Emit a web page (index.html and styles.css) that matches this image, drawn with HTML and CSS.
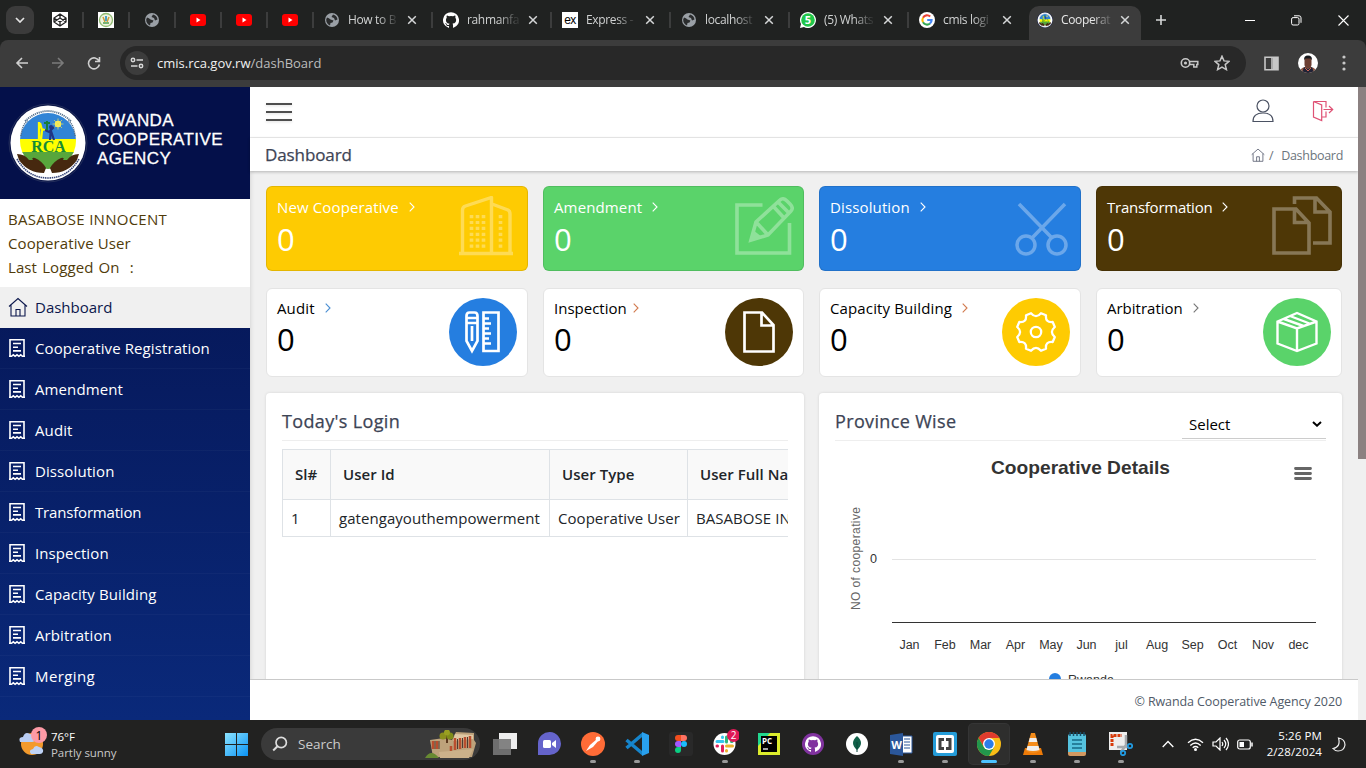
FILE: index.html
```html
<!DOCTYPE html>
<html lang="en">
<head>
<meta charset="utf-8">
<title>Cooperative Management Information System</title>
<link rel="stylesheet" href="styles.css">
</head>
<body>
<svg class="defs" width="0" height="0">
  <defs>
    <symbol id="globe" viewBox="0 0 14 14"><circle cx="7" cy="7" r="7" fill="#9aa0a6"/><path d="M2 4.5Q4 5 5.5 6.5L8.5 7.5Q8 10 5.5 10L5 12.5Q1 10.500 1.200 6.500ZM8 1.500L6.500 4L9 5L10 7.500L12.500 6.500Q12 2.500 8 1.500" fill="#2a2c2d"/></symbol>
    <symbol id="yt" viewBox="0 0 16 12"><rect width="16" height="12" rx="3" fill="#f00"/><path d="M6.500 3.500v5l4-2.500z" fill="#fff"/></symbol>
    <symbol id="x" viewBox="0 0 10 10"><path d="M1.200 1.200l7.600 7.600M8.800 1.200L1.200 8.800" stroke="#d5d7d8" stroke-width="1.500"/></symbol>
    <symbol id="cat" viewBox="0 0 16 16"><path d="M8 .2a8 8 0 0 0-2.530 15.590c.4.070.550-.170.550-.380v-1.490c-2.010.370-2.530-.490-2.690-.940-.090-.230-.480-.940-.820-1.130-.280-.150-.680-.520-.010-.530.630-.010 1.080.580 1.230.820.720 1.210 1.870.870 2.330.660.070-.520.280-.870.510-1.070-1.780-.200-3.640-.890-3.640-3.950 0-.870.310-1.590.820-2.150-.080-.200-.360-1.020.080-2.120 0 0 .670-.210 2.200.820a7.500 7.500 0 0 1 4 0c1.530-1.040 2.200-.820 2.200-.820.440 1.100.160 1.920.080 2.120.510.560.820 1.270.820 2.150 0 3.070-1.870 3.750-3.650 3.950.290.250.540.730.540 1.480v2.200c0 .210.150.460.550.380A8 8 0 0 0 8 .2z"/></symbol>
    <symbol id="receipt" viewBox="0 0 18 20"><path d="M2 18V1.700h14V18M1 18.300h2.500l1.800-1.500 1.800 1.500L9 16.800l1.900 1.500 1.800-1.500 1.800 1.500H17M5 5.500h8M5 9.200h5M5 12.900h8" fill="none" stroke="#fff" stroke-width="1.600"/></symbol>
    <symbol id="home" viewBox="0 0 20 20"><path d="M1 9.500L10 1.500l9 8M3 8v11h14V8M8 19v-6.500h4V19" fill="none" stroke="currentColor" stroke-width="1.100"/></symbol>
    <symbol id="chev" viewBox="0 0 6 10"><path d="M.7.700L5 5 .7 9.300" fill="none" stroke="currentColor" stroke-width="1.100"/></symbol>
    <symbol id="logo" viewBox="0 0 80 80">
      <circle cx="40" cy="40" r="39" fill="#0b1648" stroke="#29335f" stroke-width=".8"/><circle cx="40" cy="40" r="37.500" fill="#fff"/>
      <clipPath id="lc"><circle cx="40" cy="38" r="28"/></clipPath>
      <g clip-path="url(#lc)"><path fill="#3184d6" d="M12 10h56v27H12z"/><path fill="#ff0" d="M12 36h56v14H12z"/><path fill="#58a63c" d="M12 49h56v20H12z"/></g>
      <circle cx="50" cy="21" r="3.200" fill="#ffef55"/><path d="M50 15.500v11M44.500 21h11M46 17l8 8M54 17l-8 8" stroke="#e8e25c" stroke-width=".7"/>
      <path d="M32 20l2 7-1 10M33 26l4 1M31 19v18" stroke="#ff0" stroke-width="2.300" fill="none"/>
      <path d="M43 25l-1 12M43 28l3 9M37 27l4 2 5-5" stroke="#203584" stroke-width="2.200" fill="none"/><circle cx="43" cy="24" r="2" fill="#203584"/>
      <path d="M39 27v-9M36 20h6" stroke="#187d3b" stroke-width="2" fill="none"/>
      <path d="M17 18Q40-2 63 18" fill="none" stroke="#54708c" stroke-width="1.800" stroke-dasharray="1.200 .8"/>
      <path d="M13 33Q14 22 20 17M67 33Q66 22 60 17" fill="none" stroke="#54708c" stroke-width="1.500" stroke-dasharray="1.200 .8"/>
      <path d="M9 51q8 0 12 6l4 0q-2-3 2-2 7 3 11 10l-2 5q-16 0-25-13zM71 51q-8 0-12 6h-4q2-3-2-2-7 3-11 10l2 5q16 0 25-13z" fill="#46280f"/>
      <path d="M9 56Q20 75 40 75Q60 75 71 56" fill="none" stroke="#384779" stroke-width="1.600" stroke-dasharray="1.500 .7"/>
      <text x="40.500" y="49" text-anchor="middle" class="rca">RCA</text>
    </symbol>
  </defs>
</svg>
<div class="screen">
  <header class="tabs">
    <span class="tab-search"><svg width="10" height="6" viewBox="0 0 10 6"><path d="M1 1l4 4 4-4" fill="none" stroke="#e3e3e3" stroke-width="1.700"/></svg></span>
    <div class="pin"><svg width="16" height="16" viewBox="0 0 16 16"><path fill="#fff" d="M0 0h16v16H0z"/><path d="M8 2l6 4v4l-6 4-6-4V6zM2 6l6 4 6-4M2 10l6-4 6 4M8 2v4M8 10v4" fill="none" stroke="#222" stroke-width="1.300"/></svg></div>
    <div class="pin"><svg width="16" height="16" viewBox="0 0 16 16"><path fill="#fff" d="M0 0h16v16H0z"/><circle cx="8" cy="8" r="6.500" fill="#f1f3dd" stroke="#8fbb72" stroke-width="1.300"/><path d="M5 5l2 5M11 5l-2 5" stroke="#cb9c3a" stroke-width="1.500"/><path d="M8 4v5" stroke="#4aa1c4" stroke-width="2"/><path d="M5 11h6" stroke="#4d9f4e" stroke-width="1.500"/></svg></div>
    <div class="pin"><svg width="14" height="14"><use href="#globe"/></svg></div>
    <div class="pin"><svg width="16" height="12"><use href="#yt"/></svg></div>
    <div class="pin"><svg width="16" height="12"><use href="#yt"/></svg></div>
    <div class="pin"><svg width="16" height="12"><use href="#yt"/></svg></div>
    <div class="tab"><svg width="16" height="14"><use href="#globe"/></svg><span class="title">How to B</span><svg width="10" height="10"><use href="#x"/></svg></div>
    <div class="tab"><svg width="16" height="16" fill="#fff"><use href="#cat"/></svg><span class="title">rahmanfa</span><svg width="10" height="10"><use href="#x"/></svg></div>
    <div class="tab"><svg width="16" height="16" viewBox="0 0 16 16"><path fill="#fff" d="M0 0h16v16H0z"/><text x="8" y="11.500" text-anchor="middle" class="ex">ex</text></svg><span class="title">Express -</span><svg width="10" height="10"><use href="#x"/></svg></div>
    <div class="tab"><svg width="16" height="14"><use href="#globe"/></svg><span class="title">localhost</span><svg width="10" height="10"><use href="#x"/></svg></div>
    <div class="tab"><svg width="16" height="16" viewBox="0 0 16 16"><path d="M0 16l1-4A8 8 0 1 1 4 15z" fill="#fff"/><circle cx="8" cy="8" r="6.800" fill="#20c64a"/><text x="8" y="12" text-anchor="middle" class="wa">5</text></svg><span class="title">(5) Whats</span><svg width="10" height="10"><use href="#x"/></svg></div>
    <div class="tab nosep"><svg width="16" height="16" viewBox="0 0 16 16"><circle cx="8" cy="8" r="8" fill="#fff"/><g fill="none" stroke-width="2.100"><path d="M11.200 4.600A4.600 4.600 0 0 0 4 5.700" stroke="#ea4335"/><path d="M4 5.700a4.600 4.600 0 0 0 0 4.600" stroke="#fbbc05"/><path d="M4 10.300a4.600 4.600 0 0 0 7 1.200" stroke="#34a853"/><path d="M11 11.500A4.500 4.500 0 0 0 12.600 8H8.200" stroke="#4285f4"/></g></svg><span class="title">cmis logi</span><svg width="10" height="10"><use href="#x"/></svg></div>
    <div class="tab active"><svg width="16" height="16"><use href="#logo"/></svg><span class="title">Cooperat</span><svg width="10" height="10"><use href="#x"/></svg></div>
    <svg class="plus" width="12" height="12" viewBox="0 0 12 12"><path d="M6 1v10M1 6h10" stroke="#d5d7d8" stroke-width="1.600"/></svg>
    <div class="winctl">
      <svg width="10" height="10" viewBox="0 0 10 10"><path d="M0 5.500h10" stroke="#fff"/></svg>
      <svg width="11" height="11" viewBox="0 0 11 11"><rect x=".6" y="2.600" width="7.400" height="7.400" rx="1.500" fill="none" stroke="#fff"/><path d="M3 .8h5a2 2 0 0 1 2 2v5" fill="none" stroke="#fff"/></svg>
      <svg width="11" height="11" viewBox="0 0 11 11"><path d="M.5.500l10 10M10.500.500l-10 10" stroke="#fff" stroke-width="1.100"/></svg>
    </div>
  </header>

  <div class="toolbar">
    <svg width="14" height="14" viewBox="0 0 14 14"><path d="M13 7H2M7 2L2 7l5 5" fill="none" stroke="#d0d0d0" stroke-width="1.600"/></svg>
    <svg width="14" height="14" viewBox="0 0 14 14"><path d="M1 7h11M7 2l5 5-5 5" fill="none" stroke="#7b7b7b" stroke-width="1.600"/></svg>
    <svg width="14" height="14" viewBox="0 0 14 14"><path d="M12 5A5.500 5.500 0 1 0 12.400 8.500M12.500 1v4.500H8" fill="none" stroke="#d0d0d0" stroke-width="1.600"/></svg>
    <div class="omnibox">
      <span class="site"><svg width="14" height="14" viewBox="0 0 14 14"><g fill="none" stroke="#d8d8d8" stroke-width="1.500"><circle cx="3" cy="4" r="1.700"/><path d="M6.500 4H13M1 10h6.500"/><circle cx="11" cy="10" r="1.700"/></g></svg></span>
      <span class="url">cmis.rca.gov.rw<i>/dashBoard</i></span>
      <svg width="19" height="12" viewBox="0 0 19 12"><circle cx="5.500" cy="6" r="4.200" fill="none" stroke="#c7c7c7" stroke-width="1.600"/><circle cx="5.500" cy="6" r="1.600" fill="#c7c7c7"/><path d="M9.500 4.500h8.300v3h-1v2.500h-3V7.500H9.500" fill="none" stroke="#c7c7c7" stroke-width="1.500"/></svg>
      <svg width="16" height="16" viewBox="0 0 16 16"><path d="M8 1.200l2 4.700 5 .4-3.800 3.300 1.200 5L8 12l-4.400 2.600 1.200-5L1 6.300l5-.4z" fill="none" stroke="#c7c7c7" stroke-width="1.500"/></svg>
    </div>
    <svg class="side" width="15" height="15" viewBox="0 0 15 15"><path d="M1 1.200h13v12.600H1zM8 1v13" fill="none" stroke="#c7c7c7" stroke-width="1.600"/><path d="M9 1h5v13H9z" fill="#c7c7c7"/></svg>
    <svg class="avatar" width="20" height="20" viewBox="0 0 20 20"><clipPath id="av"><circle cx="10" cy="10" r="10"/></clipPath><g clip-path="url(#av)"><path fill="#fff" d="M0 0h20v20H0z"/><path d="M1 20q1-5 6-6h6q5 1 6 6z" fill="#8c5744"/><path d="M4 20l2-6 4 2 4-2 2 6z" fill="#202235"/><rect x="6.500" y="4" width="7" height="11" rx="3.500" fill="#6c3f32"/><path d="M6.200 7q-.7-4.500 3.800-4.500T13.800 7l-1.500-1.500H7.700z" fill="#17191d"/><path d="M7 15l3 3 3-3" fill="none" stroke="#ca6451"/></g></svg>
    <svg class="dots" width="4" height="16" viewBox="0 0 4 16"><g fill="#c7c7c7"><circle cx="2" cy="2" r="1.600"/><circle cx="2" cy="8" r="1.600"/><circle cx="2" cy="14" r="1.600"/></g></svg>
  </div>

  <div class="page">
    <aside class="sidebar">
      <div class="brand"><svg width="80" height="80"><use href="#logo"/></svg><div class="brand-name">RWANDA<br>COOPERATIVE<br>AGENCY</div></div>
      <div class="user"><div class="u1">BASABOSE INNOCENT</div><div class="u2">Cooperative User</div><div class="u3">Last Logged On &nbsp;:</div></div>
      <nav>
        <a class="on"><svg width="20" height="20"><use href="#home"/></svg>Dashboard</a>
        <a><svg width="18" height="20"><use href="#receipt"/></svg>Cooperative Registration</a>
        <a><svg width="18" height="20"><use href="#receipt"/></svg>Amendment</a>
        <a><svg width="18" height="20"><use href="#receipt"/></svg>Audit</a>
        <a><svg width="18" height="20"><use href="#receipt"/></svg>Dissolution</a>
        <a class="narrow"><svg width="18" height="20"><use href="#receipt"/></svg>Transformation</a>
        <a><svg width="18" height="20"><use href="#receipt"/></svg>Inspection</a>
        <a><svg width="18" height="20"><use href="#receipt"/></svg>Capacity Building</a>
        <a><svg width="18" height="20"><use href="#receipt"/></svg>Arbitration</a>
        <a class="wide"><svg width="18" height="20"><use href="#receipt"/></svg>Merging</a>
      </nav>
    </aside>

    <main class="main">
      <div class="topbar">
        <span class="burger"><b></b><b></b><b></b></span>
        <svg width="22" height="24" viewBox="0 0 22 24"><g fill="none" stroke="#4b5263" stroke-width="1.200"><circle cx="11" cy="7" r="6"/><path d="M1 22.500q0-8.500 10-8.500t10 8.500z"/></g></svg>
        <svg width="22" height="22" viewBox="0 0 22 22"><path d="M1.500 1.500h12.500v6M14 11.500v5.500h-4M1.500 1.500v15.500l8.200 3.500V5L1.500 1.500M11.500 9.500h9M17 6l3.700 3.500L17 13" fill="none" stroke="#df5275" stroke-width="1.200"/></svg>
      </div>
      <div class="crumbs"><h1>Dashboard</h1><span class="path"><svg width="14" height="14"><use href="#home"/></svg><span>/</span><span class="here">Dashboard</span></span></div>

      <div class="content">
        <div class="cards">
          <div class="card solid yellow"><div><p>New Cooperative <svg width="6" height="10"><use href="#chev"/></svg></p><strong>0</strong></div>
            <svg width="56" height="60" viewBox="0 0 56 60"><g fill="none" stroke="#fff" stroke-width="3.400" stroke-linejoin="round"><path d="M1 57.500h54M4.500 57V14q0-3 3-4l26-8.500V57M34 8l16 6q2 1 2 4v39"/></g><g stroke="#fff" stroke-width="3.600" stroke-dasharray="3.200 2.700"><path d="M13.500 19v34M19.500 19v34M25.500 19v34M42.500 19v34"/></g></svg></div>
          <div class="card solid green"><div><p>Amendment <svg width="6" height="10"><use href="#chev"/></svg></p><strong>0</strong></div>
            <svg width="60" height="60" viewBox="0 0 60 60"><g fill="none" stroke="#fff" stroke-width="3.600"><path d="M27.500 9H2v48h52.500V27"/><path d="M16 44l5-18L45 4q3-3 7 1l3 3q4 4 1 7L33 39zM21 26l12 13M38 10l12 13M43 6l12 12"/></g><path d="M14 46l4-12 9 7z" fill="#fff"/></svg></div>
          <div class="card solid blue"><div><p>Dissolution <svg width="6" height="10"><use href="#chev"/></svg></p><strong>0</strong></div>
            <svg width="54" height="54" viewBox="0 0 54 54"><g fill="none" stroke="#fff" stroke-width="3.500"><circle cx="11" cy="43" r="9"/><circle cx="42" cy="43" r="9"/><path d="M4 2l33 34M50 2L17 36"/></g></svg></div>
          <div class="card solid brown"><div><p class="narrow">Transformation <svg width="6" height="10"><use href="#chev"/></svg></p><strong>0</strong></div>
            <svg width="60" height="60" viewBox="0 0 60 60"><g fill="none" stroke="#fff" stroke-width="3.600"><path d="M2 13h22l13 14v30H2zM22.500 14v12.500H36M22.500 8V2h22L58 16v31H41M43 3v13h14"/></g></svg></div>

          <div class="card"><div><p>Audit <svg class="c-blue" width="6" height="10"><use href="#chev"/></svg></p><strong>0</strong></div>
            <span class="disc d-blue"><svg width="40" height="44" viewBox="0 0 40 44"><g fill="none" stroke="#fff" stroke-width="2.700"><path d="M3.500 31V6q0-3.500 3-3.500h5q3 0 3 3.500v25L9 41zM3.500 8h11M3.500 13h11M9 16v15"/><path d="M20.500 2.500h15v38.500h-15zM21 8.500h5M21 13.500h7M21 18.500h5M21 23.500h7M21 28.500h5M21 33.500h7"/></g></svg></span></div>
          <div class="card"><div><p class="tight">Inspection <svg class="c-orange" width="6" height="10"><use href="#chev"/></svg></p><strong>0</strong></div>
            <span class="disc d-brown"><svg width="32" height="42" viewBox="0 0 32 42"><path d="M1.500 1.500H19l11.500 12.500v26.500h-29zM18.500 2v12.500H30" fill="none" stroke="#fff" stroke-width="2.700"/></svg></span></div>
          <div class="card"><div><p>Capacity Building <svg class="c-orange" width="6" height="10"><use href="#chev"/></svg></p><strong>0</strong></div>
            <span class="disc d-yellow"><svg width="42" height="42" viewBox="0 0 42 42"><g fill="none" stroke="#fff" stroke-width="2.300" stroke-linejoin="round"><circle cx="21" cy="21" r="5.200"/><path d="M39.800 26L37.700 31Q30.200 30.200 31 37.700L26 39.800Q21 34 16 39.800L11 37.700Q11.800 30.200 4.300 31L2.200 26Q8 21 2.200 16L4.300 11Q11.800 11.800 11 4.300L16 2.200Q21 8 26 2.200L31 4.300Q30.200 11.800 37.700 11L39.800 16Q34 21 39.800 26z"/></g></svg></span></div>
          <div class="card"><div><p class="level">Arbitration <svg class="c-grey" width="6" height="10"><use href="#chev"/></svg></p><strong>0</strong></div>
            <span class="disc d-green"><svg width="42" height="42" viewBox="0 0 42 42"><path d="M1.500 10.500L21 2l19.500 8.500v22L21 40 1.500 32.500zM1.500 10.500L21 17.500l19.500-7M21 17.500V40M8 8l19.500 7M14 5l19.500 7.500" fill="none" stroke="#fff" stroke-width="2.400"/></svg></span></div>
        </div>

        <div class="panels">
          <section class="panel">
            <div class="phead"><h2>Today's Login</h2></div>
            <div class="clip"><table>
              <tr><th class="n">Sl#</th><th class="id">User Id</th><th class="type">User Type</th><th class="name">User Full Name</th></tr>
              <tr><td>1</td><td>gatengayouthempowerment</td><td>Cooperative User</td><td>BASABOSE INNOCENT</td></tr>
            </table></div>
          </section>
          <section class="panel">
            <div class="phead"><h2>Province Wise</h2><div class="select">Select<svg width="10" height="6" viewBox="0 0 10 6"><path d="M1 1l4 3.700L9 1" fill="none" stroke="#000" stroke-width="2"/></svg></div></div>
            <svg class="chart" width="491" height="260" viewBox="835 441 491 260">
              <text class="ctitle" x="1080.500" y="474" textLength="179" lengthAdjust="spacingAndGlyphs">Cooperative Details</text>
              <path d="M1295.500 468.500h15M1295.500 473.500h15M1295.500 478.500h15" stroke="#666" stroke-width="2.800" stroke-linecap="round"/>
              <text class="ylab" transform="translate(859.500 558.500) rotate(-90)" textLength="103">NO of cooperative</text>
              <text x="873.500" y="563" textLength="7" lengthAdjust="spacingAndGlyphs">0</text>
              <path d="M892 559.500h424" stroke="#e3e3e3"/><path d="M892 622.500h424" stroke="#333"/>
              <g><text x="909.500" y="649">Jan</text><text x="945" y="649">Feb</text><text x="980.500" y="649">Mar</text><text x="1015.500" y="649">Apr</text><text x="1051" y="649">May</text><text x="1086.500" y="649">Jun</text><text x="1121.500" y="649">jul</text><text x="1157" y="649">Aug</text><text x="1192.500" y="649">Sep</text><text x="1227.500" y="649">Oct</text><text x="1263" y="649">Nov</text><text x="1298.500" y="649">dec</text></g>
              <circle cx="1055" cy="679" r="6" fill="#257ee0"/><text x="1091" y="684" textLength="46">Rwanda</text>
            </svg>
          </section>
        </div>
      </div>
      <footer class="foot">© Rwanda Cooperative Agency 2020</footer>
    </main>
    <div class="scroll"><span></span></div>
  </div>

  <div class="taskbar">
    <div class="weather"><svg width="30" height="30" viewBox="0 0 30 30"><circle cx="13" cy="17" r="11" fill="#f39a2c"/><path d="M1 15q-2-5 3-5 2-6 7-3 5 0 5 5 0 3-3 3z" fill="#b9cdf3"/><path d="M12 27q-3-4 2-5 2-5 6-2 5 1 4 5-1 2-3 2z" fill="#bfd3f5"/><circle cx="20" cy="8" r="8" fill="#fd9aa5"/><text x="20" y="12.500" text-anchor="middle" class="wn">1</text></svg><div>76°F<br><i>Partly sunny</i></div></div>
    <svg class="win" width="23" height="23" viewBox="0 0 23 23"><defs><linearGradient id="wg" x2="1" y2="1"><stop stop-color="#8ce3ff"/><stop offset="1" stop-color="#0a93f5"/></linearGradient></defs><path d="M0 0h11v11H0zM12 0h11v11H12zM0 12h11v11H0zM12 12h11v11H12z" fill="url(#wg)"/></svg>
    <div class="search"><svg width="16" height="16" viewBox="0 0 16 16"><circle cx="9.200" cy="6.500" r="5.200" fill="none" stroke="#ddd" stroke-width="1.700"/><path d="M5.500 10.200L1.200 14.500" stroke="#ddd" stroke-width="2"/></svg><span>Search</span><svg class="art" width="51" height="28" viewBox="0 0 51 28"><path d="M5 10l14-2 8 2 4-8 18 1v7l2 3-4 14H8z" fill="#bda27b"/><path d="M30 4l18 1v4L28 11z" fill="#dfc8a4"/><path d="M0 28q6-10 14 0z" fill="#678a32"/><path d="M8 11v8M12 11v8M30 8v12M35 8v11M40 7v11M45 6v12M26 16v5" stroke="#b94e2e" stroke-width="2.500"/><path d="M10 11v8M14 11v8M32.500 9v10M37.500 8v10M42.500 7v11" stroke="#4d3c32"/><path d="M22 13V4" stroke="#5c3a20" stroke-width="2"/><circle cx="18" cy="6" r="3.500" fill="#8a8f1c"/><circle cx="25" cy="6" r="3.500" fill="#7f8c19"/><circle cx="22" cy="2.500" r="3" fill="#99a021"/><path d="M14 22l34-3-4 9H15z" fill="#cbb18a"/></svg></div>
    <div class="apps">
      <span><svg width="24" height="22" viewBox="0 0 24 22"><path d="M6 0h18v16H6z" fill="#eee"/><path d="M0 6h18v16H0z" fill="#777" opacity=".9"/></svg></span>
      <span><svg width="24" height="24" viewBox="0 0 24 24"><path d="M1 23V11A11.500 11.500 0 1 1 12 23z" fill="#6564cb"/><rect x="6" y="8" width="8" height="8" rx="1.500" fill="#fff"/><path d="M15 11l4-3v8l-4-3z" fill="#fff"/></svg></span>
      <span class="run"><svg width="24" height="24" viewBox="0 0 24 24"><circle cx="12" cy="12" r="12" fill="#ff6c37"/><path d="M5 19l4-6 7-6 2 1-6 7z" fill="#fff"/><circle cx="17" cy="7" r="2.400" fill="#fff"/></svg></span>
      <span class="run"><svg width="24" height="24" viewBox="0 0 24 24"><path d="M1.500 8L18 22M1.500 16L18 2" stroke="#1685cc" stroke-width="3.500"/><path d="M17 0l7 3v18l-7 3z" fill="#29a0ed"/></svg></span>
      <span><svg width="24" height="24" viewBox="0 0 24 24"><rect width="24" height="24" rx="3" fill="#292929"/><path d="M12 3H9a3 3 0 0 0 0 6h3" fill="#f24e1e"/><path d="M12 3h3a3 3 0 0 1 0 6h-3" fill="#ff7262"/><path d="M12 9H9a3 3 0 0 0 0 6h3" fill="#a259ff"/><circle cx="15" cy="12" r="3" fill="#1abcfe"/><path d="M12 15H9a3 3 0 1 0 3 3" fill="#0acf83"/></svg></span>
      <span class="run"><svg width="28" height="30" viewBox="0 0 28 30"><circle cx="13.500" cy="15" r="11" fill="#fff"/><g stroke-width="3" stroke-linecap="round"><path d="M6 12.500h6M11.500 8v.5" stroke="#36c5f0"/><path d="M15.500 8v5M20.500 12.500h.5" stroke="#2eb67d"/><path d="M15.500 17h6M15.500 21.500v.5" stroke="#ecb22e"/><path d="M11.500 17v5M6 17h.5" stroke="#e01e5a"/></g><circle cx="22.500" cy="6.500" r="6.500" fill="#df1956"/><text x="22.500" y="10" text-anchor="middle" class="sn">2</text></svg></span>
      <span><svg width="22" height="22" viewBox="0 0 22 22"><path fill="#dcec2c" d="M0 0h22v22H0z"/><path fill="#22d88f" d="M0 0h12L0 13z"/><path d="M3 3h16v16H3z"/><text x="4" y="11" class="pc">PC</text><path d="M5 16h5" stroke="#fff" stroke-width="1.300"/></svg></span>
      <span><svg width="22" height="22" viewBox="0 0 22 22"><circle cx="11" cy="11" r="11" fill="#81339f"/><svg x="3" y="3" width="16" height="16" fill="#fff"><use href="#cat"/></svg></svg></span>
      <span><svg width="22" height="22" viewBox="0 0 22 22"><circle cx="11" cy="11" r="11" fill="#fff"/><path d="M11 3q8 7 0 14-8-7 0-14" fill="#116149"/><path d="M11 9v10" stroke="#0b463a"/></svg></span>
      <span class="run"><svg width="23" height="23" viewBox="0 0 23 23"><path d="M11 3h11v17H11z" fill="#fff" stroke="#2b579a"/><path d="M14 6h6M14 9h6M14 12h6M14 15h6" stroke="#2b579a"/><path d="M0 2l13-2v23L0 21z" fill="#2b579a"/><text x="6.500" y="15.500" text-anchor="middle" class="wd">W</text></svg></span>
      <span class="run"><svg width="24" height="24" viewBox="0 0 24 24"><rect width="24" height="24" rx="2" fill="#249cd8"/><rect x="3" y="3" width="18" height="18" rx="2" fill="#fff"/><path d="M11 7.500H7v9h4M13 7.500h4v9h-4" fill="none" stroke="#414141" stroke-width="3"/></svg></span>
      <span class="run current"><svg width="24" height="24" viewBox="0 0 24 24"><circle cx="12" cy="12" r="12" fill="#f9bd16"/><path d="M1.600 6A12 12 0 0 1 22.400 6H12l-5 9z" fill="#df3b2e"/><path d="M1.600 6A12 12 0 0 0 12 24l5.200-9L12 18l-5.200-3z" fill="#22964c"/><circle cx="12" cy="12" r="6" fill="#fff"/><circle cx="12" cy="12" r="4.700" fill="#2b7de9"/></svg></span>
      <span class="run"><svg width="20" height="24" viewBox="0 0 20 24"><path d="M2 16h16l2 7H0z" fill="#ee7b08"/><path d="M8 1h4l5 18q-7 4-14 0z" fill="#f38c1b"/><path d="M6.700 6h6.600l1 4H5.700zM4.500 14h11l1 4q-6.500 2-13 0z" fill="#eee"/></svg></span>
      <span class="run"><svg width="20" height="24" viewBox="0 0 20 24"><rect x="1" y="2" width="18" height="20" rx="2" fill="#55c3df"/><path d="M1 20h18v2q0 2-2 2H3q-2 0-2-2z" fill="#d29961"/><path d="M3 0v4M6.500 0v4M10 0v4M13.500 0v4M17 0v4" stroke="#184f69" stroke-width="1.500"/><path d="M5 8h10M5 12h10M5 16h10" stroke="#176986" stroke-width="1.500"/></svg></span>
      <span class="run"><svg width="24" height="24" viewBox="0 0 24 24"><rect width="18" height="18" fill="#eee"/><path d="M3 14V3.500h10" stroke="#d83b0b" fill="none" stroke-width="3" stroke-dasharray="3 1"/><path d="M17 3v10l-5 7M8 15h11" stroke="#a5a9ad" stroke-width="2.500" fill="none"/><circle cx="14" cy="21" r="2.200" fill="none" stroke="#219be2" stroke-width="1.800"/><circle cx="21" cy="14" r="2.200" fill="none" stroke="#219be2" stroke-width="1.800"/></svg></span>
    </div>
    <div class="tray">
      <svg width="12" height="8" viewBox="0 0 12 8"><path d="M.7 7L6 1.500 11.300 7" fill="none" stroke="#fff" stroke-width="1.300"/></svg>
      <svg width="17" height="13" viewBox="0 0 17 13"><g fill="none" stroke="#fff" stroke-width="1.300"><path d="M1 4.800q7.500-7 15 0M3.300 7.400q5.200-4.800 10.400 0M5.700 9.700q2.800-2.400 5.600 0"/></g><circle cx="8.500" cy="11.500" r="1.500" fill="#fff"/></svg>
      <svg width="17" height="14" viewBox="0 0 17 14"><g fill="none" stroke="#fff" stroke-width="1.200"><path d="M1 5h3l4-4v12L4 9H1zM10 5q1.500 2 0 4M12 3q3.500 4 0 8M14 1q5 6 0 12"/></g></svg>
      <svg width="16" height="11" viewBox="0 0 16 11"><rect x=".7" y="1" width="12.600" height="9" rx="2" fill="none" stroke="#fff" stroke-width="1.200"/><rect x="2.500" y="3" width="4.500" height="5" fill="#fff"/><path d="M15 3.500v4" stroke="#fff" stroke-width="1.500"/></svg>
      <div class="clock">5:26 PM<br>2/28/2024</div>
      <svg width="14" height="15" viewBox="0 0 14 15"><path d="M6.500 1Q13 2 13 8q-1 6-7 6-3 0-5-2.500 8-1.500 5.500-10.500z" fill="none" stroke="#eee" stroke-width="1.200"/></svg>
    </div>
  </div>
</div>
</body>
</html>
```

FILE: styles.css
```css
* { box-sizing: border-box; }
body { margin: 0; font-family: "Open Sans", "Noto Sans", sans-serif; font-size: 15px; }
i { font-style: normal; }
p, h1, h2 { margin: 0; }
svg { flex: none; display: block; }
.defs { position: absolute; }
.screen { width: 1366px; height: 768px; overflow: hidden; display: flex; flex-direction: column; background: #202221; }

/* browser frame */
.tabs { height: 40px; flex: none; display: flex; align-items: center; padding-left: 6px; background: #202221; }
.tab-search { width: 28px; height: 28px; border-radius: 9px; background: #3b3b3b; display: grid; place-items: center; margin-right: 4px; }
.pin, .tab { display: flex; align-items: center; border-right: 2px solid #3c3d3d; height: 16px; }
.pin { width: 46px; justify-content: center; }
.tab { width: 119px; padding: 0 14px 0 10px; color: #d0d2d2; font-size: 12px; }
.title { width: 52px; margin: 0 9px 0 8px; white-space: nowrap; line-height: 18px; letter-spacing: -.35px; -webkit-mask-image: linear-gradient(90deg, #000 60%, rgba(0, 0, 0, .15) 95%); mask-image: linear-gradient(90deg, #000 60%, rgba(0, 0, 0, .15) 95%); }
.nosep { border-color: transparent; }
.active { width: 112px; height: 34px; align-self: flex-end; background: #3c3c3c; border: 0; border-radius: 10px 10px 0 0; padding: 0 0 6px 8px; margin-left: 1px; margin-right: 14px; color: #e8e8e8; }
.active .title { width: 52px; margin-right: 7px; }
.winctl { display: flex; margin-left: auto; gap: 36px; padding-right: 17px; align-items: center; }
.toolbar { height: 47px; flex: none; display: flex; align-items: center; padding: 0 20px 1px 15px; background: #3c3c3c; border-radius: 8px 8px 0 0; gap: 22px; }
.omnibox { width: 1126px; flex: none; height: 34px; margin-left: -3px; border-radius: 17px; background: #282828; display: flex; align-items: center; padding: 0 16px 0 5px; gap: 15px; }
.site { width: 24px; height: 24px; border-radius: 12px; background: #3c3c3c; display: grid; place-items: center; }
.url { flex: 1; margin-left: -7px; color: #f0f0f0; font-size: 13px; line-height: 18px; padding-bottom: 1px; }
.url i { color: #bdbdbd; }
.side { margin-left: -4px; }
.avatar { margin-left: -3px; }
.dots { margin-left: 2px; }

/* application */
.page { height: 633px; flex: none; display: flex; background: #f0f0f0; }
.sidebar { width: 250px; height: 633px; flex: none; background: linear-gradient(#04104a, #0a297a); }
.brand { height: 112px; display: flex; gap: 9px; padding: 16px 8px; background: #04104a; }
.brand-name { padding-top: 8px; font: 17px/19px "Liberation Sans", sans-serif; letter-spacing: .4px; color: #fff; -webkit-text-stroke: .3px #fff; }
.user { height: 88px; padding: 8px; background: #fff; color: #503b0a; line-height: 24px; }
.u1 { letter-spacing: .27px; }
.u2 { letter-spacing: .1px; }
.u3 { letter-spacing: .1px; word-spacing: 1.1px; }
.sidebar nav a { height: 41px; display: flex; align-items: center; gap: 9px; padding-left: 8px; color: #fff; font-weight: 500; letter-spacing: .1px; border-bottom: 1px solid rgba(255, 255, 255, .03); }
.sidebar nav .narrow { letter-spacing: -.18px; }
.sidebar nav .wide { letter-spacing: .4px; }
.sidebar nav a.on { background: #f0f0f0; color: #0b174c; gap: 7px; font-weight: 400; letter-spacing: 0; }
.main { width: 1108px; flex: none; display: flex; flex-direction: column; box-shadow: inset 4px 0 5px -4px #ccc; }
.topbar { height: 51px; flex: none; background: #fff; border-bottom: 1px solid #eee; display: flex; align-items: center; padding: 0 24px 3px 16px; gap: 38px; }
.burger { width: 26px; display: grid; gap: 6px; margin-right: auto; padding-top: 2px; }
.burger b { height: 2px; background: #4e4e4e; box-shadow: 0 1px 3px #ddd; }
.crumbs { height: 33px; flex: none; display: flex; justify-content: space-between; align-items: center; padding: 1px 15px 0; background: #fff; box-shadow: 0 1px 3px rgba(0, 0, 0, .25); }
h1 { font-size: 17px; line-height: 24px; font-weight: 500; color: #3d4455; letter-spacing: -.1px; -webkit-text-stroke: .25px #3d4455; }
.path { display: flex; align-items: center; gap: 4px; font-size: 12.500px; color: #6c757d; letter-spacing: -.3px; }
.path svg { color: #4e5568; }
.here { margin-left: 4px; }
.content { height: 508px; flex: none; overflow: hidden; padding: 15px 16px 0; }
.cards { display: grid; grid-template-columns: 262px 261px 262px 246px; grid-template-rows: 85px 89px; column-gap: 15px; row-gap: 17px; }
.card { display: flex; justify-content: space-between; background: #fff; border: 1px solid #e4e4e4; border-radius: 6px; padding: 8px 10px; color: #000; }
.card p { height: 21px; display: flex; align-items: center; gap: 10px; white-space: nowrap; letter-spacing: .13px; }
.card .tight { gap: 6px; letter-spacing: 0; }
.card .narrow { letter-spacing: -.25px; }
.card .level { letter-spacing: 0; }
.card strong { display: block; font-size: 31px; font-weight: 400; line-height: 43px; }
.solid { color: #fff; padding: 9px 10px; border-color: rgba(0, 0, 0, .1); }
.solid p { height: 22px; font-weight: 500; }
.solid strong { line-height: 43px; }
.solid > svg { opacity: .32; }
.yellow { background-color: #fecb02; padding-right: 13px; }
.green { background-color: #5ad36a; padding-right: 8px; }
.blue { background-color: #257ee0; padding-right: 11px; }
.blue > svg { margin-top: 6px; }
.brown { background-color: #4e3706; padding-right: 9px; }
.c-blue { color: #4b8fd3; } .c-orange { color: #d27b4f; } .c-grey { color: #777; }
.disc { width: 68px; height: 68px; border-radius: 50%; display: grid; place-items: center; margin-top: 1px; flex: none; }
.d-blue { background: #257ee0; } .d-brown { background: #4e3706; } .d-yellow { background: #fecb02; } .d-green { background: #5ad36a; }
.panels { display: grid; grid-template-columns: 538px 523px; gap: 15px; margin-top: 16px; }
.panel { height: 340px; min-width: 0; padding: 16px; background: #fff; border-radius: 4px; box-shadow: 0 0 3px rgba(0, 0, 0, .12); }
.phead { height: 32px; display: flex; justify-content: space-between; border-bottom: 1px solid #eee; }
h2 { font-size: 18px; line-height: 24px; font-weight: 500; color: #3d4455; letter-spacing: .35px; -webkit-text-stroke: .25px #3d4455; }
.select { width: 144px; height: 30px; display: flex; justify-content: space-between; align-items: center; padding: 1px 4px 0 7px; border-bottom: 1px solid #ccc; color: #000; }
.clip { width: 506px; overflow: hidden; margin-top: 8px; }
table { table-layout: fixed; width: 620px; border-collapse: collapse; font-size: 15px; color: #212529; }
th, td { border: 1px solid #dee2e6; text-align: left; white-space: nowrap; padding: 0 8px 1px; height: 37px; font-weight: 400; letter-spacing: .05px; }
th { background: #f9f9f9; padding: 0 12px 1px; height: 50px; font-weight: 600; }
.n { width: 48px; } .id { width: 219px; } .type { width: 138px; }
.chart { font: 12.500px "Liberation Sans", sans-serif; fill: #333; text-anchor: middle; overflow: visible; }
.ctitle { font-size: 19px; font-weight: 700; }
.ylab { font-size: 12px; fill: #666; }
.foot { height: 41px; flex: none; background: #fff; border-top: 1px solid #c9c9c9; text-align: right; padding-right: 16px; font-size: 12.500px; line-height: 43px; color: #505a68; letter-spacing: -.1px; }
.scroll { width: 8px; background: #f0f0f0; }
.scroll span { display: block; height: 372px; background: #8b8181; }

/* desktop taskbar */
.taskbar { height: 48px; flex: none; background: #222221; display: flex; align-items: center; color: #fff; }
.weather { width: 225px; padding-left: 19px; display: flex; gap: 2px; font-size: 11.500px; line-height: 16px; letter-spacing: -.05px; }
.weather > div { padding-top: 1px; } .weather i { color: #c8c8c8; }
.weather > svg { margin-top: -1px; }
.search { width: 219px; height: 32px; display: flex; align-items: center; margin-left: 13px; border-radius: 16px; padding: 0 4px 0 11px; background: #3a3a3a; color: #ccc; font-size: 13.500px; gap: 10px; }
.search span { flex: 1; }
.apps { display: flex; margin-left: 3px; height: 48px; }
.apps span { width: 40px; height: 40px; margin: 4px 2px; display: grid; place-items: center; position: relative; }
.run::after { content: ""; position: absolute; bottom: 1px; left: 17px; width: 6px; height: 3px; border-radius: 2px; background: #999; }
.current { background: #2e2e2d; border-radius: 4px; box-shadow: 0 0 0 1px #353535; }
.current::after { left: 12px; width: 16px; background: #4cc2ff; }
.tray { display: flex; align-items: center; margin-left: auto; padding-right: 20px; gap: 8px; }
.tray > svg:first-child { margin-right: 5px; }
.clock { width: 61px; margin-right: 2px; text-align: right; font-size: 11.500px; line-height: 16px; letter-spacing: .1px; }
.rca { font: 700 16px "Liberation Serif", serif; fill: #168b35; }
.ex { font: 12px "Liberation Sans", sans-serif; letter-spacing: -.5px; }
.wa { font: 700 11px "Open Sans", sans-serif; fill: #fff; }
.wn { font: 12px "Open Sans", sans-serif; }
.sn { font: 10px "Open Sans", sans-serif; fill: #fff; }
.pc { font: 700 8px "Open Sans", sans-serif; fill: #fff; }
.wd { font: 700 11px "Open Sans", sans-serif; fill: #fff; }
```
